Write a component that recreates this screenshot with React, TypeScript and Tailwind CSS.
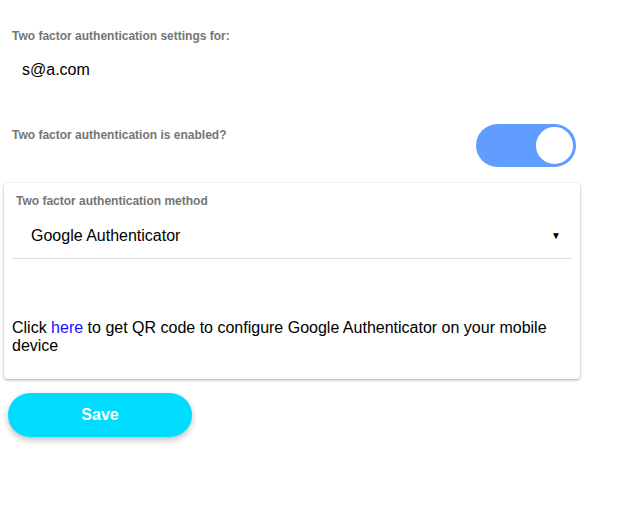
export default function App() {
  return (
    <div className="w-[636px] h-[522px] bg-white font-['Liberation_Sans',Arial,sans-serif] text-black">
      <div className="pt-[29px] pl-[12px] text-[12px] font-bold text-[#757575] leading-[14px]">
        Two factor authentication settings for:
      </div>
      <div className="pl-[22px] pt-[18px] text-[16px] leading-[18px]">s@a.com</div>
      <div className="flex items-start justify-between w-[576px] pl-[12px] mt-[45px]">
        <div className="pt-[4px] text-[12px] font-bold text-[#757575] leading-[14px]">
          Two factor authentication is enabled?
        </div>
        <div className="w-[100px] h-[43px] rounded-full bg-[#619dff] flex items-center justify-end pr-[1px]">
          <div className="w-[41px] h-[41px] rounded-full bg-white border-[2px] border-[#619dff]" />
        </div>
      </div>
      <div className="ml-[4px] mt-[16px] w-[576px] h-[196px] rounded-[4px] bg-white shadow-[0_1px_3px_rgba(0,0,0,0.35)] flex flex-col">
        <div className="pl-[8px] pr-[8px] pt-[11px]">
          <div className="pl-[4px] text-[12px] font-bold text-[#757575] leading-[14px]">
            Two factor authentication method
          </div>
          <div className="flex items-center justify-between pl-[19px] pr-[11px] h-[36px] mt-[10px]">
            <span className="text-[16px] leading-[18px]">Google Authenticator</span>
            <span className="text-[10px] leading-[10px]">▼</span>
          </div>
          <div className="h-px bg-[#dcdcdc] mt-[4px]" />
        </div>
        <div className="pl-[8px] pr-[20px] mt-[60px] text-[16px] leading-[18px]">
          Click <span className="text-[#1a0dff]">here</span> to get QR code to configure Google Authenticator on your mobile device
        </div>
      </div>
      <button className="ml-[8px] mt-[14px] w-[184px] h-[44px] rounded-full bg-[#00dcff] text-white font-bold text-[16px] shadow-[0_3px_6px_rgba(0,0,0,0.25)]">
        Save
      </button>
    </div>
  );
}
